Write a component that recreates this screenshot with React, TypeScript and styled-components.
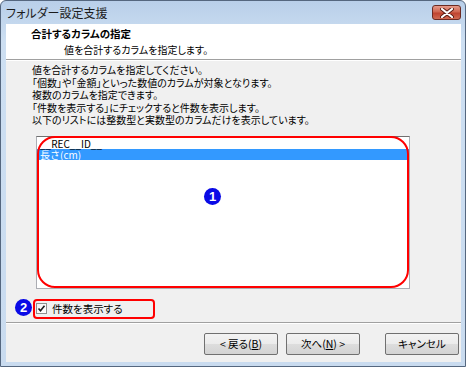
import * as React from "react"
import styled, { createGlobalStyle } from "styled-components"

const GlobalStyle = createGlobalStyle`
    html, body {
        margin: 0;
        padding: 0;
        background: #ffffff;
    }
    body {
        font-family: "Noto Sans CJK JP", "Liberation Sans", sans-serif;
        color: #000000;
    }
`

const Window = styled.div`
    width: 466px;
    height: 367px;
    box-sizing: border-box;
    display: flex;
    flex-direction: column;
    background: linear-gradient(#b9cfe9, #cddff2 40px, #c9dbef);
    border: 1px solid #55677f;
    border-radius: 6px 6px 0 0;
    overflow: hidden;
`

const TitleBar = styled.div`
    height: 23px;
    display: flex;
    align-items: center;
    justify-content: space-between;
    padding: 0 4px 0 5px;
    flex-shrink: 0;
`

const Caption = styled.div`
    font-size: 12px;
    font-feature-settings: "palt";
    color: #1b1b1b;
    line-height: 1;
`

const CloseButton = styled.div`
    align-self: flex-start;
    margin-top: 4px;
    width: 29px;
    height: 15px;
    box-sizing: border-box;
    border: 1px solid #6b2a22;
    border-radius: 3px;
    background: linear-gradient(#e59a8b, #d06650 45%, #bf4430 55%, #d06a52);
    display: flex;
    align-items: center;
    justify-content: center;
`

const Client = styled.div`
    flex: 1;
    margin: 0 4px 4px 5px;
    background: #f0f0f0;
    display: flex;
    flex-direction: column;
`

const Header = styled.div`
    height: 35px;
    flex-shrink: 0;
    background: #ffffff;
    border-bottom: 1px solid #a0a0a0;
    box-shadow: 0 1px 0 #ffffff;
    display: flex;
    flex-direction: column;
`

const HeaderTitle = styled.div`
    font-size: 10.5px;
    font-weight: bold;
    font-feature-settings: "palt";
    padding: 3px 0 0 25px;
    line-height: 14px;
`

const HeaderSub = styled.div`
    font-size: 10px;
    font-feature-settings: "palt";
    padding: 2px 0 0 58px;
    line-height: 14px;
`

const Body = styled.div`
    height: 262px;
    flex-shrink: 0;
    box-sizing: border-box;
    padding: 4px 0 0 26px;
    display: flex;
    flex-direction: column;
`

const Instructions = styled.div`
    font-size: 10px;
    font-feature-settings: "palt";
    line-height: 12.5px;
    white-space: nowrap;
`

const ListWrap = styled.div`
    position: relative;
    margin: 9px 0 0 4px;
    width: 374px;
    height: 153px;
`

const ListBox = styled.ul`
    list-style-type: none;
    margin: 0;
    padding: 1px 0 0 0;
    width: 100%;
    height: 100%;
    box-sizing: border-box;
    background: #ffffff;
    border: 1px solid #abadb3;
    border-top-color: #707070;
`

const ListItem = styled.li<{ $selected?: boolean }>`
    height: 11px;
    line-height: 11px;
    font-size: 10px;
    padding-left: 3px;
    white-space: nowrap;
    background: ${p => (p.$selected ? "#3399ff" : "transparent")};
    color: ${p => (p.$selected ? "#ffffff" : "#000000")};
`

const Annotation = styled.div<{ $radius: number }>`
    position: absolute;
    inset: 0 1px 1px 1px;
    border: 2.5px solid #ff0000;
    border-radius: ${p => p.$radius}px;
    pointer-events: none;
`

const Badge = styled.div`
    position: absolute;
    width: 17px;
    height: 17px;
    border-radius: 50%;
    background: #0a0ae6;
    color: #ffffff;
    font-family: "Liberation Sans", sans-serif;
    font-weight: bold;
    font-size: 13px;
    line-height: 17px;
    text-align: center;
`

const CheckRow = styled.label`
    position: relative;
    margin: 14px 0 0 4px;
    display: flex;
    align-items: center;
    gap: 5px;
    height: 11px;
    font-size: 10.5px;
    font-feature-settings: "palt";
    line-height: 11px;
`

const CheckBox = styled.span`
    width: 11px;
    height: 11px;
    box-sizing: border-box;
    border: 1px solid #8f8f8f;
    background: linear-gradient(135deg, #f4f4f4, #ffffff);
    display: flex;
    align-items: center;
    justify-content: center;
`

const CheckFrame = styled.div`
    position: absolute;
    left: -3px;
    top: -4px;
    width: 122px;
    height: 20px;
    box-sizing: border-box;
    border: 2px solid #ff0000;
    border-radius: 4px;
    pointer-events: none;
`

const Separator = styled.div`
    height: 1px;
    flex-shrink: 0;
    background: #a0a0a0;
    border-bottom: 1px solid #ffffff;
`

const ButtonBar = styled.div`
    flex: 1;
    display: flex;
    align-items: flex-start;
    justify-content: flex-end;
    padding: 9px 2px 0 0;
    gap: 8px;
`

const Button = styled.button<{ $gapLeft?: number }>`
    width: 74px;
    height: 22px;
    margin-left: ${p => p.$gapLeft || 0}px;
    box-sizing: border-box;
    border: 1px solid #707070;
    border-radius: 2px;
    background: linear-gradient(#f3f3f3, #ebebeb 50%, #dddddd 50%, #d3d3d3);
    font-family: "Noto Sans CJK JP", "Liberation Sans", sans-serif;
    font-size: 10.5px;
    font-feature-settings: "palt";
    color: #000000;
    padding: 0;
    line-height: 1;
`

const CloseGlyph = () =>
<svg width="14" height="10" viewBox="0 0 14 10">
    <path d="M2 1 L12 9 M12 1 L2 9" stroke="#5a1c14" strokeWidth="4" strokeLinecap="round" />
    <path d="M2 1 L12 9 M12 1 L2 9" stroke="#ffffff" strokeWidth="2.2" strokeLinecap="round" />
</svg>

const CheckMark = () =>
<svg width="9" height="9" viewBox="0 0 9 9">
    <path d="M1.5 4.5 L3.5 6.8 L7.5 1.8" fill="none" stroke="#1c1c1c" strokeWidth="1.6" />
</svg>

const lines = [
    "値を合計するカラムを指定してください。",
    "「個数」や「金額」といった数値のカラムが対象となります。",
    "複数のカラムを指定できます。",
    "「件数を表示する」にチェックすると件数を表示します。",
    "以下のリストには整数型と実数型のカラムだけを表示しています。",
]

const columns = ["__REC__ID__", "長さ(cm)"]

const App = () => {
    const selected = 1
    return <>
        <GlobalStyle />
        <Window>
            <TitleBar>
                <Caption>フォルダー設定支援</Caption>
                <CloseButton><CloseGlyph /></CloseButton>
            </TitleBar>
            <Client>
                <Header>
                    <HeaderTitle>合計するカラムの指定</HeaderTitle>
                    <HeaderSub>値を合計するカラムを指定します。</HeaderSub>
                </Header>
                <Body>
                    <Instructions>
                        {lines.map((l, i) => <div key={i}>{l}</div>)}
                    </Instructions>
                    <ListWrap>
                        <ListBox>
                            {columns.map((c, i) =>
                                <ListItem key={i} $selected={i === selected}>{c}</ListItem>
                            )}
                        </ListBox>
                        <Annotation $radius={18} />
                        <Badge style={{ left: 168, top: 52 }}>1</Badge>
                    </ListWrap>
                    <CheckRow>
                        <CheckBox><CheckMark /></CheckBox>
                        件数を表示する
                        <CheckFrame />
                        <Badge style={{ left: -21, top: -4 }}>2</Badge>
                    </CheckRow>
                </Body>
                <Separator />
                <ButtonBar>
                    <Button>&lt; 戻る(<u>B</u>)</Button>
                    <Button>次へ(<u>N</u>) &gt;</Button>
                    <Button $gapLeft={17}>キャンセル</Button>
                </ButtonBar>
            </Client>
        </Window>
    </>
}

export default App
